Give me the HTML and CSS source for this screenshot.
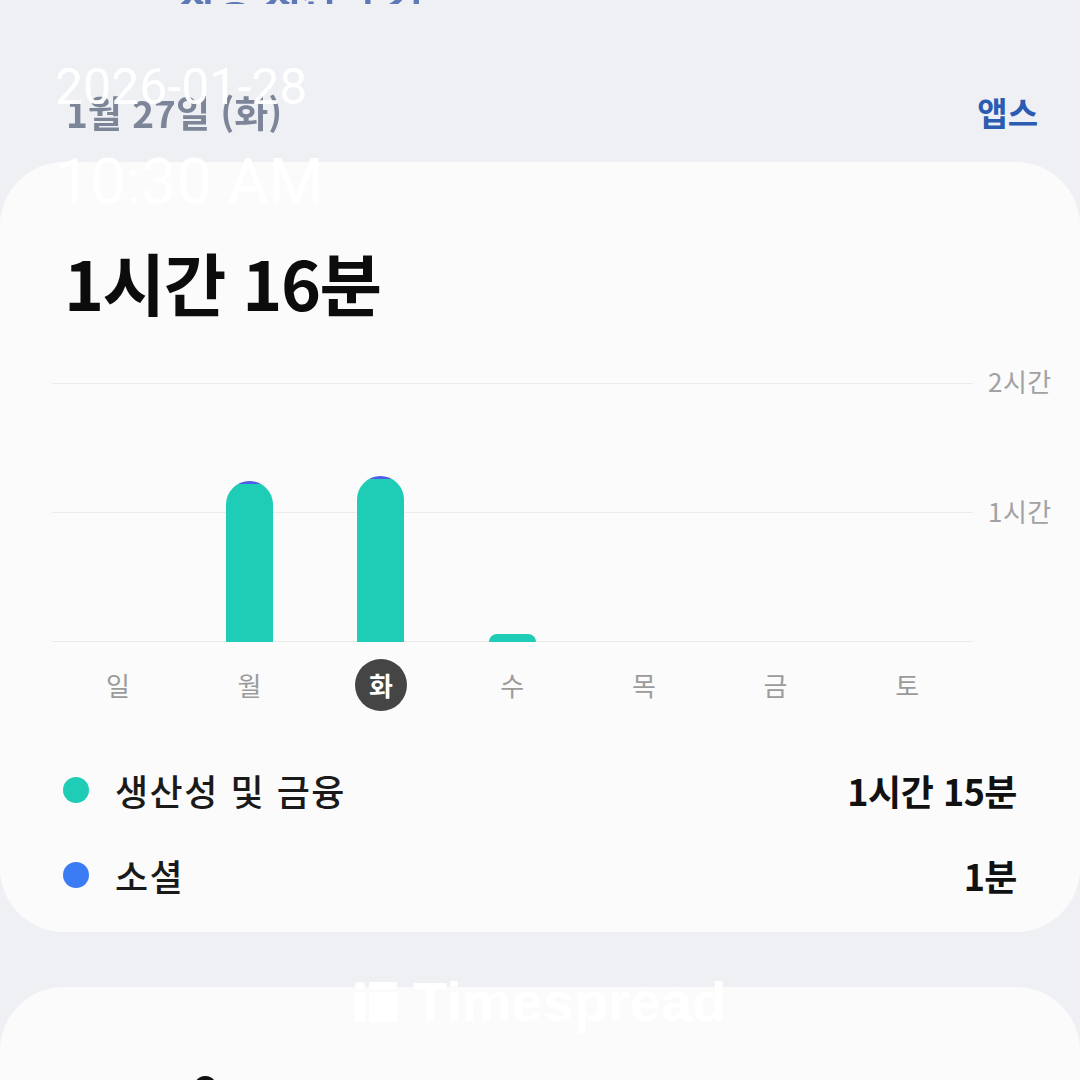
FILE: index.html
```html
<!DOCTYPE html>
<html lang="ko">
<head>
    <meta charset="UTF-8">
    <meta name="viewport" content="width=device-width, initial-scale=1.0">
    <title>디지털 웰빙</title>
    <link rel="stylesheet" href="styles.css">
</head>
<body>

    <div class="topbar"><span>사용 시간 보기</span></div>

    <div class="header">
        <div class="date">1월 27일 (화)</div>
        <div class="apps">앱스</div>
    </div>

    <div class="card">
        <h1 class="total">1시간 16분</h1>

        <div class="chart">
            <div class="plot">
                <div class="col"><div class="bar" style="height: 0px"></div></div>
                <div class="col">
                    <div class="bar" style="height: 161px">
                        <div class="seg social" style="height: 3px"></div>
                        <div class="seg prod"></div>
                    </div>
                </div>
                <div class="col">
                    <div class="bar" style="height: 166px">
                        <div class="seg social" style="height: 3px"></div>
                        <div class="seg prod"></div>
                    </div>
                </div>
                <div class="col">
                    <div class="bar" style="height: 8px">
                        <div class="seg prod"></div>
                    </div>
                </div>
                <div class="col"></div>
                <div class="col"></div>
                <div class="col"></div>
            </div>
            <div class="axis">
                <span>2시간</span>
                <span class="second">1시간</span>
            </div>
        </div>

        <div class="days">
            <span>일</span>
            <span>월</span>
            <span class="today">화</span>
            <span>수</span>
            <span>목</span>
            <span>금</span>
            <span>토</span>
        </div>

        <ul class="legend">
            <li>
                <span class="dot prod"></span>
                <span class="name">생산성 및 금융</span>
                <span class="time">1시간 15분</span>
            </li>
            <li>
                <span class="dot social"></span>
                <span class="name">소셜</span>
                <span class="time">1분</span>
            </li>
        </ul>
    </div>

    <div class="card next">
        <h2 class="next-title">0</h2>
    </div>

    <!-- camera stamp + app watermark over the screenshot -->
    <div class="stamp">
        <div class="stamp-date">2026-01-28</div>
        <div class="stamp-time">10:30 AM</div>
    </div>

    <div class="brand">
        <svg width="42" height="42" viewBox="0 0 42 42">
            <rect x="0" y="1" width="10" height="8" rx="4" fill="#fff"/>
            <rect x="0" y="11" width="10" height="30" fill="#fff"/>
            <rect x="14" y="1" width="28" height="7" fill="#fff"/>
            <rect x="14" y="11" width="28" height="30" fill="#fff"/>
        </svg>
        <span>Timespread</span>
    </div>

</body>
</html>
```

FILE: styles.css
```css
body {
    margin: 0;
    background-color: #eef0f4;
    font-family: "Noto Sans CJK KR", "Noto Sans", sans-serif;
    color: #111;
    width: 1080px;
    height: 1080px;
    overflow: hidden;
    position: relative;
}
.topbar {
    height: 4px;
    overflow: hidden;
    display: flex;
    align-items: flex-end;
    padding-left: 180px;
}
.topbar span {
    font-size: 40px;
    line-height: 40px;
    font-weight: 700;
    color: #3a5ca8;
    margin-bottom: -10px;
    opacity: 0.8;
}
.header {
    display: flex;
    justify-content: space-between;
    align-items: center;
    padding: 86px 42px 0 66px;
    height: 44px;
    margin-bottom: 28px;
}
.date {
    font-size: 37px;
    font-weight: 700;
    letter-spacing: 0;
    color: #7d8699;
    filter: blur(0.7px);
}
.apps {
    font-size: 33px;
    font-weight: 700;
    color: #2b5cb2;
}
.card {
    background: #fbfbfb;
    border-radius: 64px;
    padding: 0 0 27px;
}
.total {
    margin: 0;
    padding: 70px 0 0 64px;
    font-size: 68px;
    line-height: 100px;
    font-weight: 700;
    letter-spacing: -1.5px;
    color: #0c0c0c;
}
.chart {
    display: flex;
    margin-top: 51px;
    padding-left: 52px;
}
.plot {
    width: 921px;
    height: 259px;
    display: flex;
    align-items: flex-end;
    background:
        linear-gradient(#ebebeb, #ebebeb) 0 0 / 100% 1px no-repeat,
        linear-gradient(#ebebeb, #ebebeb) 0 129px / 100% 1px no-repeat,
        linear-gradient(#ebebeb, #ebebeb) 0 100% / 100% 1px no-repeat;
}
.col {
    flex: 1;
    display: flex;
    justify-content: center;
    align-items: flex-end;
    height: 100%;
}
.bar {
    width: 47px;
    border-radius: 24px 24px 0 0;
    overflow: hidden;
    display: flex;
    flex-direction: column;
}
.seg.social { background: #4f5ee8; }
.seg.prod { flex: 1; background: #1fcdb6; }
.axis {
    display: flex;
    flex-direction: column;
    padding-left: 15px;
}
.axis span {
    font-size: 26px;
    line-height: 30px;
    letter-spacing: 0.5px;
    color: #a2a2a2;
}
.axis span:first-child { margin-top: -17px; }
.axis .second { margin-top: 100px; }
.days {
    display: flex;
    width: 921px;
    margin-left: 52px;
    padding-top: 17px;
}
.days span {
    flex: 1;
    text-align: center;
    font-size: 26px;
    line-height: 52px;
    color: #9b9b9b;
}
.days .today {
    flex: none;
    width: 52px;
    margin: 0 39.5px;
    border-radius: 50%;
    background: #454545;
    color: #fff;
    font-weight: 700;
}
.legend {
    list-style: none;
    margin: 49px 0 0;
    padding: 0 63px;
}
.legend li {
    display: flex;
    align-items: center;
    height: 60px;
    margin-bottom: 25px;
}
.legend li:last-child { margin-bottom: 0; }
.dot {
    width: 26px;
    height: 26px;
    border-radius: 50%;
    margin-right: 26px;
}
.dot.prod { background: #1fcdb6; }
.dot.social { background: #3b7bf3; }
.name {
    flex: 1;
    font-size: 36px;
    font-weight: 500;
    letter-spacing: 1.5px;
    color: #1a1a1a;
}
.time {
    font-size: 36px;
    font-weight: 700;
    letter-spacing: -0.5px;
    color: #111;
}
.card.next {
    margin-top: 55px;
    height: 300px;
}
.next-title {
    margin: 0;
    padding: 80px 0 0 190px;
    font-size: 52px;
    line-height: 52px;
    font-weight: 700;
}
.stamp {
    position: absolute;
    left: 55px;
    top: 58px;
    font-family: Roboto, "Liberation Sans", sans-serif;
    color: rgba(255, 255, 255, 0.95);
}
.stamp-date {
    font-size: 50px;
    line-height: 58px;
}
.stamp-time {
    font-size: 63px;
    line-height: 72px;
    margin-top: 30px;
}
.brand {
    position: absolute;
    left: 355px;
    top: 980px;
    display: flex;
    align-items: center;
    gap: 16px;
    color: rgba(255, 255, 255, 0.95);
    font-family: "Liberation Sans", Arial, sans-serif;
    font-weight: 700;
    font-size: 56px;
    line-height: 44px;
}
```
